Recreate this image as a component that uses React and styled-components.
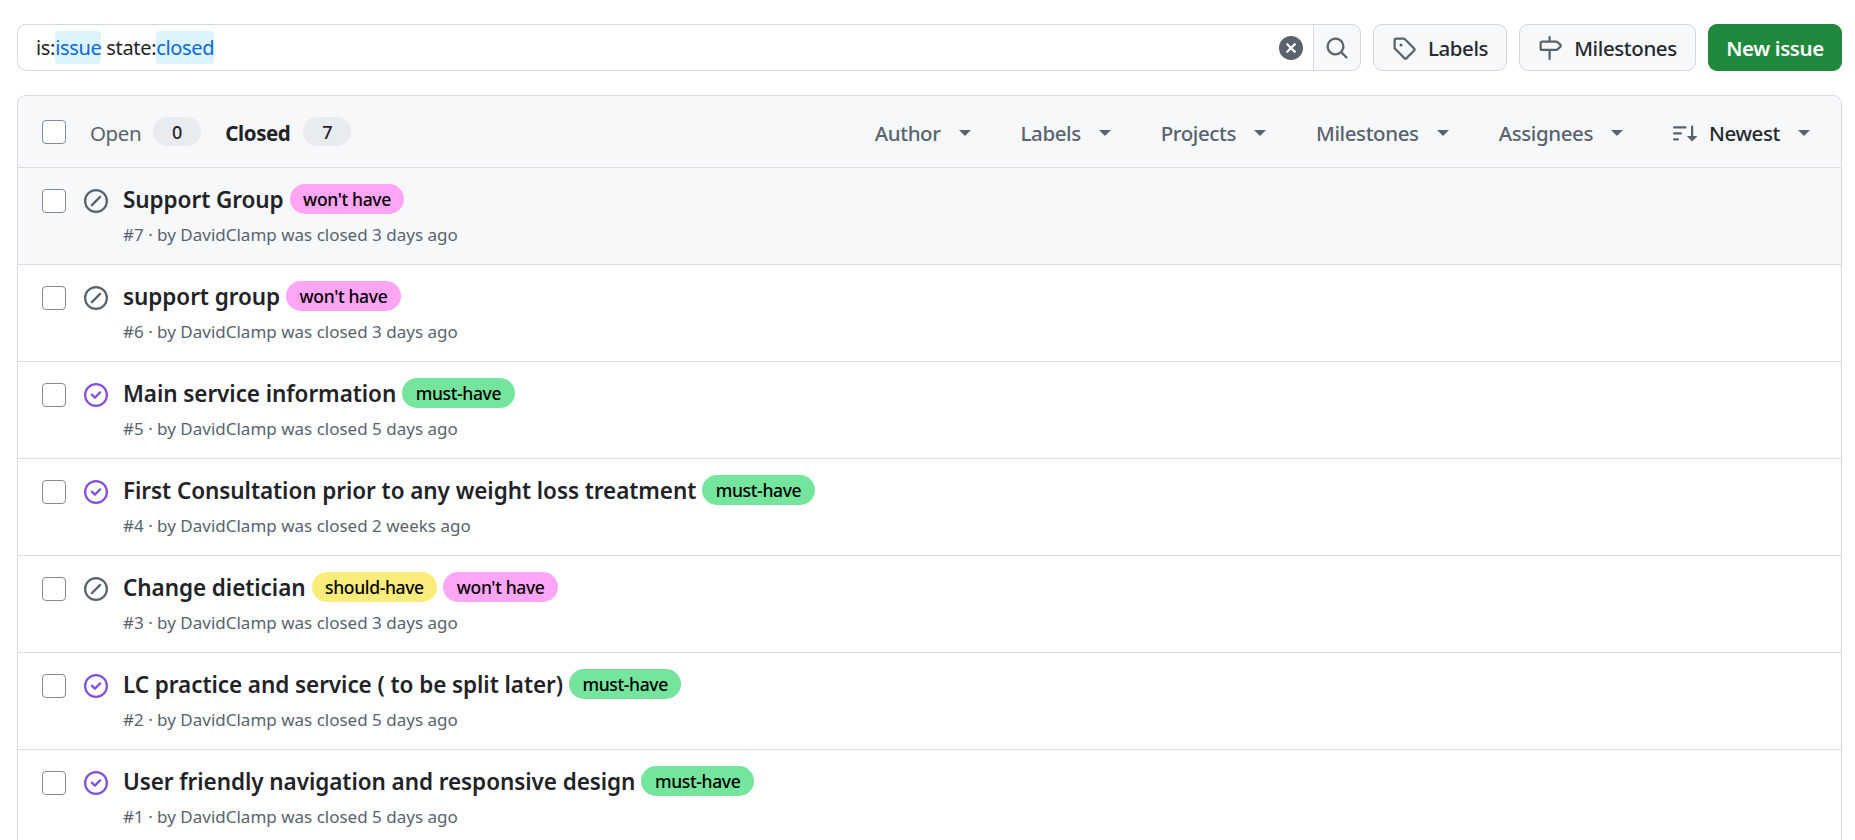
import React from 'react';
import styled, { createGlobalStyle } from 'styled-components';

const GlobalStyle = createGlobalStyle`
  html, body {
    margin: 0;
    padding: 0;
    height: 840px;
    overflow: hidden;
    background: #ffffff;
    font-family: "Noto Sans", "Open Sans", sans-serif;
    color: #1f2328;
  }
`;

const Page = styled.div`
  padding: 24px 13px 0 17px;
`;

const Toolbar = styled.div`
  display: flex;
  align-items: stretch;
  height: 47px;
  margin-bottom: 24px;
`;

const SearchBox = styled.div`
  flex: 1;
  display: flex;
  align-items: center;
  justify-content: space-between;
  background: #ffffff;
  border: 1px solid #d1d9e0;
  border-radius: 9px 0 0 9px;
  padding: 0 10px 0 18px;
  font-size: 20px;
  letter-spacing: -0.33px;
`;

const Token = styled.span`
  color: #0969da;
  background: #ddf4ff;
  border-radius: 4px;
  padding: 3px 0;
`;

const ClearIcon = styled.svg`
  width: 24px;
  height: 24px;
  fill: #59636e;
`;

const SearchButton = styled.button`
  width: 48px;
  margin-left: -1px;
  margin-right: 12px;
  display: flex;
  align-items: center;
  justify-content: center;
  background: #f6f8fa;
  border: 1px solid #d1d9e0;
  border-radius: 0 9px 9px 0;
  padding: 0;
`;

const Button = styled.button`
  display: flex;
  align-items: center;
  justify-content: center;
  gap: 12px;
  width: ${(p) => p.$width}px;
  margin-right: 12px;
  padding: 0;
  background: #f6f8fa;
  border: 1px solid #d1d9e0;
  border-radius: 9px;
  color: #25292e;
  font-family: inherit;
  font-size: 20.5px;
  font-weight: 500;
  letter-spacing: -0.4px;
`;

const PrimaryButton = styled(Button)`
  margin-right: 0;
  background: #1f883d;
  border-color: #1f883d;
  color: #ffffff;
  font-weight: 600;
`;

const ButtonIcon = styled.svg`
  width: 24px;
  height: 24px;
  fill: #59636e;
`;

const Panel = styled.div`
  border: 1px solid #d1d9e0;
  border-bottom: 0;
  border-radius: 9px 9px 0 0;
`;

const PanelHeader = styled.div`
  display: flex;
  align-items: center;
  justify-content: space-between;
  height: 71px;
  padding: 0 31px 0 24px;
  background: #f6f8fa;
  border-bottom: 1px solid #d8dee4;
  border-radius: 9px 9px 0 0;
`;

const StateTabs = styled.div`
  display: flex;
  align-items: center;
`;

const Checkbox = styled.span`
  display: block;
  flex: none;
  width: 24px;
  height: 24px;
  box-sizing: border-box;
  background: #ffffff;
  border: 1px solid #818b98;
  border-radius: 4px;
`;

const StateTab = styled.span`
  margin-left: 24px;
  padding: 3px ${(p) => (p.$active ? 1 : 0)}px 0 0;
  font-size: 20.5px;
  letter-spacing: -0.4px;
  font-weight: ${(p) => (p.$active ? 700 : 400)};
  color: ${(p) => (p.$active ? '#1f2328' : '#59636e')};
`;

const CountBadge = styled.span`
  display: flex;
  align-items: center;
  justify-content: center;
  width: 48px;
  height: 29px;
  margin-left: 12px;
  border-radius: 15px;
  background: #e8ebef;
  font-size: 18px;
  font-weight: 500;
`;

const Filters = styled.div`
  display: flex;
  align-items: center;
`;

const Filter = styled.span`
  display: flex;
  align-items: center;
  margin-right: ${(p) => (p.$last ? 0 : 50)}px;
  padding-top: 3px;
  font-size: 20.5px;
  font-weight: 500;
  letter-spacing: -0.4px;
  color: ${(p) => (p.$last ? '#25292e' : '#59636e')};
`;

const Caret = styled.span`
  width: 0;
  height: 0;
  margin-left: 18px;
  border-left: 6px solid transparent;
  border-right: 6px solid transparent;
  border-top: 6px solid #59636e;
`;

const SortIcon = styled.svg`
  width: 24px;
  height: 24px;
  margin: 2px 12px 0 0;
  fill: #59636e;
`;

const Row = styled.div`
  display: flex;
  box-sizing: border-box;
  height: 97px;
  padding: 21px 24px 0;
  background: ${(p) => (p.$hover ? '#f6f8fa' : '#ffffff')};
  border-bottom: 1px solid #d8dee4;
`;

const StateIcon = styled.svg`
  flex: none;
  width: 24px;
  height: 24px;
  margin: 0 15px 0 18px;
  fill: ${(p) => (p.$done ? '#8250df' : '#59636e')};
`;

const RowBody = styled.div`
  display: flex;
  flex-direction: column;
  margin-top: -5px;
`;

const TitleLine = styled.div`
  display: flex;
  align-items: center;
  gap: 6px;
  height: 30px;
`;

const Title = styled.span`
  font-size: 22.5px;
  font-weight: 600;
  letter-spacing: -0.07px;
  color: #1f2328;
`;

const Label = styled.span`
  display: flex;
  align-items: center;
  height: 30px;
  padding: 0 13.5px;
  border-radius: 15px;
  background: ${(p) => p.$bg};
  color: #000000;
  font-size: 17.5px;
  font-weight: 500;
  letter-spacing: -0.35px;
`;

const Meta = styled.div`
  margin-top: 9px;
  font-size: 17px;
  line-height: 24px;
  color: #59636e;
`;

const LABELS = {
  wont: { text: "won't have", bg: '#ffa5f5' },
  must: { text: 'must-have', bg: '#75e49d' },
  should: { text: 'should-have', bg: '#f9ec7b' },
};

const ISSUES = [
  { n: 7, title: 'Support Group', labels: ['wont'], when: '3 days ago', done: false, hover: true },
  { n: 6, title: 'support group', labels: ['wont'], when: '3 days ago', done: false },
  { n: 5, title: 'Main service information', labels: ['must'], when: '5 days ago', done: true },
  { n: 4, title: 'First Consultation prior to any weight loss treatment', labels: ['must'], when: '2 weeks ago', done: true },
  { n: 3, title: 'Change dietician', labels: ['should', 'wont'], when: '3 days ago', done: false },
  { n: 2, title: 'LC practice and service ( to be split later)', labels: ['must'], when: '5 days ago', done: true },
  { n: 1, title: 'User friendly navigation and responsive design', labels: ['must'], when: '5 days ago', done: true },
];

const FILTERS = ['Author', 'Labels', 'Projects', 'Milestones', 'Assignees'];

const paths = {
  x: 'M2.343 13.657A8 8 0 1 1 13.658 2.343 8 8 0 0 1 2.343 13.657ZM6.03 4.97a.751.751 0 0 0-1.042.018.751.751 0 0 0-.018 1.042L6.94 8 4.97 9.97a.749.749 0 0 0 .326 1.275.749.749 0 0 0 .734-.215L8 9.06l1.97 1.97a.749.749 0 0 0 1.275-.326.749.749 0 0 0-.215-.734L9.06 8l1.97-1.97a.749.749 0 0 0-.326-1.275.749.749 0 0 0-.734.215L8 6.94Z',
  search: 'M10.68 11.74a6 6 0 0 1-7.922-8.982 6 6 0 0 1 8.982 7.922l3.04 3.04a.749.749 0 0 1-.326 1.275.749.749 0 0 1-.734-.215ZM11.5 7a4.499 4.499 0 1 0-8.997 0A4.499 4.499 0 0 0 11.5 7Z',
  tag: 'M1 7.775V2.75C1 1.784 1.784 1 2.75 1h5.025c.464 0 .91.184 1.238.513l6.25 6.25a1.75 1.75 0 0 1 0 2.474l-5.026 5.026a1.75 1.75 0 0 1-2.474 0l-6.25-6.25A1.752 1.752 0 0 1 1 7.775Zm1.5 0c0 .066.026.13.073.177l6.25 6.25a.25.25 0 0 0 .354 0l5.025-5.025a.25.25 0 0 0 0-.354l-6.25-6.25a.25.25 0 0 0-.177-.073H2.75a.25.25 0 0 0-.25.25ZM6 5a1 1 0 1 1 0 2 1 1 0 0 1 0-2Z',
  milestone: 'M7.75 0a.75.75 0 0 1 .75.75V3h3.634c.414 0 .814.147 1.13.414l2.07 1.75a1.75 1.75 0 0 1 0 2.672l-2.07 1.75a1.75 1.75 0 0 1-1.13.414H8.5v5.25a.75.75 0 0 1-1.5 0V10H2.75A1.75 1.75 0 0 1 1 8.25v-3.5C1 3.784 1.784 3 2.75 3H7V.75A.75.75 0 0 1 7.75 0Zm4.384 8.5a.25.25 0 0 0 .161-.06l2.07-1.75a.248.248 0 0 0 0-.38l-2.07-1.75a.25.25 0 0 0-.161-.06H2.75a.25.25 0 0 0-.25.25v3.5c0 .138.112.25.25.25h9.384Z',
  sort: 'M0 4.25a.75.75 0 0 1 .75-.75h7.5a.75.75 0 0 1 0 1.5H.75A.75.75 0 0 1 0 4.25Zm0 4a.75.75 0 0 1 .75-.75h4.5a.75.75 0 0 1 0 1.5H.75A.75.75 0 0 1 0 8.25Zm0 4a.75.75 0 0 1 .75-.75h2.5a.75.75 0 0 1 0 1.5H.75a.75.75 0 0 1-.75-.75ZM13.5 10h2.25a.25.25 0 0 1 .177.427l-3 3a.25.25 0 0 1-.354 0l-3-3A.25.25 0 0 1 9.75 10H12V3.75a.75.75 0 0 1 1.5 0V10Z',
  skip: 'M0 8a8 8 0 1 1 16 0A8 8 0 0 1 0 8Zm1.5 0a6.5 6.5 0 1 0 13 0 6.5 6.5 0 0 0-13 0Zm9.78-2.22-5.5 5.5a.749.749 0 0 1-1.275-.326.749.749 0 0 1 .215-.734l5.5-5.5a.751.751 0 0 1 1.042.018.751.751 0 0 1 .018 1.042Z',
  closed: 'M11.28 6.78a.75.75 0 0 0-1.06-1.06L7.25 8.69 5.78 7.22a.75.75 0 0 0-1.06 1.06l2 2a.75.75 0 0 0 1.06 0l3.5-3.5ZM16 8A8 8 0 1 1 0 8a8 8 0 0 1 16 0Zm-1.5 0a6.5 6.5 0 1 0-13 0 6.5 6.5 0 0 0 13 0Z',
};

const Issue = ({ issue }) => (
  <Row $hover={issue.hover}>
    <Checkbox />
    <StateIcon $done={issue.done} viewBox="0 0 16 16">
      <path d={issue.done ? paths.closed : paths.skip} />
    </StateIcon>
    <RowBody>
      <TitleLine>
        <Title>{issue.title}</Title>
        {issue.labels.map((key) => (
          <Label key={key} $bg={LABELS[key].bg}>{LABELS[key].text}</Label>
        ))}
      </TitleLine>
      <Meta>#{issue.n} · by DavidClamp was closed {issue.when}</Meta>
    </RowBody>
  </Row>
);

const App = () => (
  <Page>
    <GlobalStyle />
    <Toolbar>
      <SearchBox>
        <span>is:<Token>issue</Token> state:<Token>closed</Token></span>
        <ClearIcon viewBox="0 0 16 16"><path d={paths.x} /></ClearIcon>
      </SearchBox>
      <SearchButton>
        <ButtonIcon viewBox="0 0 16 16"><path d={paths.search} /></ButtonIcon>
      </SearchButton>
      <Button $width={134}>
        <ButtonIcon viewBox="0 0 16 16"><path d={paths.tag} /></ButtonIcon>
        Labels
      </Button>
      <Button $width={177}>
        <ButtonIcon viewBox="0 0 16 16"><path d={paths.milestone} /></ButtonIcon>
        Milestones
      </Button>
      <PrimaryButton $width={134}>New issue</PrimaryButton>
    </Toolbar>
    <Panel>
      <PanelHeader>
        <StateTabs>
          <Checkbox />
          <StateTab>Open</StateTab>
          <CountBadge>0</CountBadge>
          <StateTab $active>Closed</StateTab>
          <CountBadge>7</CountBadge>
        </StateTabs>
        <Filters>
          {FILTERS.map((f) => (
            <Filter key={f}>{f}<Caret /></Filter>
          ))}
          <SortIcon viewBox="0 0 16 16"><path d={paths.sort} /></SortIcon>
          <Filter $last>Newest<Caret /></Filter>
        </Filters>
      </PanelHeader>
      {ISSUES.map((issue) => <Issue key={issue.n} issue={issue} />)}
    </Panel>
  </Page>
);

export default App;
